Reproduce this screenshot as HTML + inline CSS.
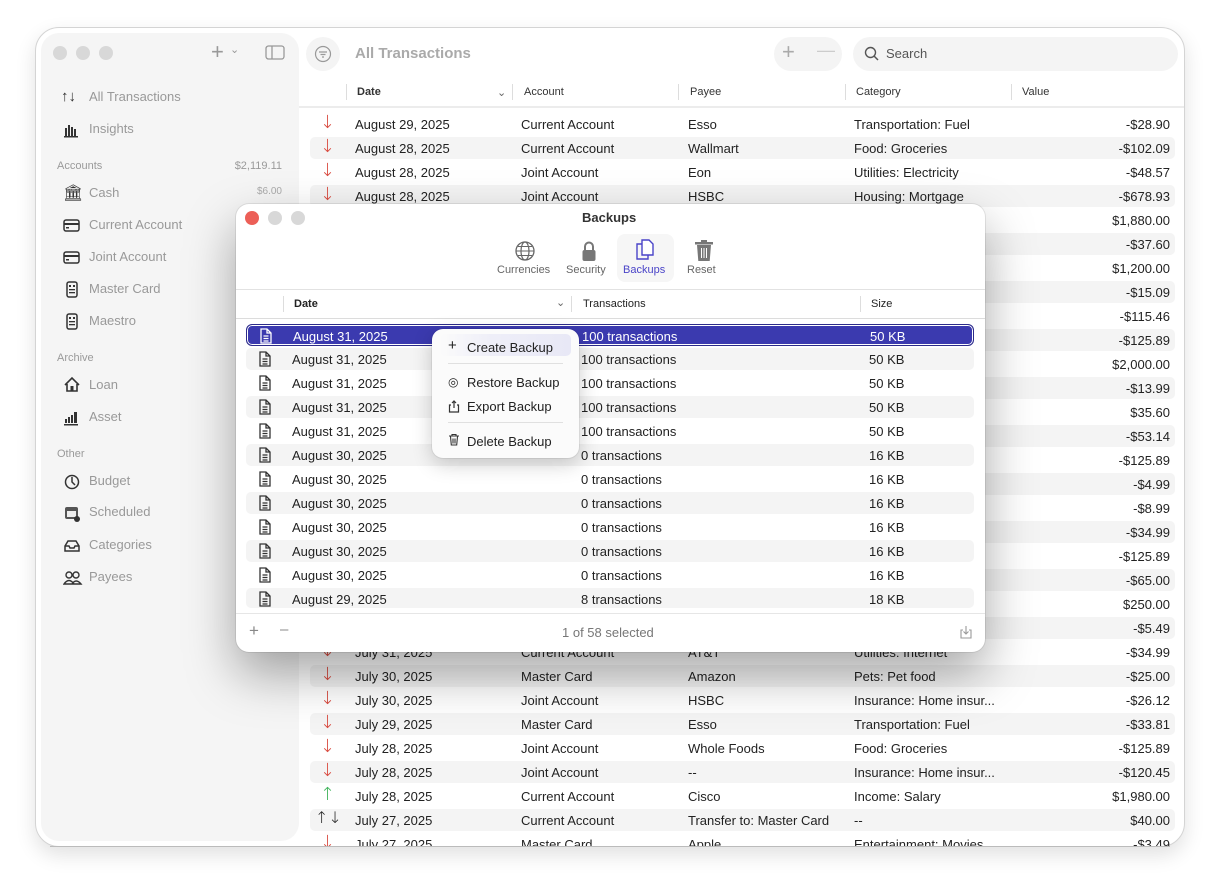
<!DOCTYPE html>
<html><head><meta charset="utf-8">
<style>
*{box-sizing:border-box;margin:0;padding:0}
body{width:1220px;height:890px;background:#fff;font-family:"Liberation Sans",sans-serif;font-size:13px;color:#222;position:relative;overflow:hidden}
.win{position:absolute;left:35px;top:27px;width:1150px;height:820px;border-radius:24px;background:#fff;border:1px solid #d4d4d4;box-shadow:0 8px 20px rgba(0,0,0,.12);overflow:hidden}
.side{position:absolute;left:5px;top:5px;width:258px;height:808px;background:#f5f5f5;border-radius:18px}
.a{position:absolute;white-space:nowrap}
.dot{position:absolute;width:14px;height:14px;border-radius:50%;background:#d8d8d8}
.sl{position:absolute;left:48px;color:#999;font-size:13px}
.sh{position:absolute;left:16px;color:#9a9a9a;font-size:11px}
.si{position:absolute;left:22px;width:18px;height:18px}
.r{position:absolute;left:275px;width:865px;height:22px}
.r.s{background:#f4f4f4;border-radius:5px}
.r span{position:absolute;top:4px;white-space:nowrap}
.ar{left:10px;color:#d94a3f;font-size:18px;top:-1px!important;font-family:"DejaVu Sans",sans-serif;font-weight:100}
.c1{left:45px}.c2{left:211px}.c3{left:378px}.c4{left:544px}.c5{right:5px}
.hd{position:absolute;top:86px;font-size:11px;color:#333}
.vs{position:absolute;width:1px;height:16px;background:#ddd}
.dlg{position:absolute;left:236px;top:204px;width:749px;height:448px;background:#fff;border-radius:13px;box-shadow:0 22px 50px rgba(0,0,0,.35),0 0 0 1px rgba(0,0,0,.08);overflow:hidden}
.br{position:absolute;left:10px;width:728px;height:22px}
.br.s{background:#f4f4f4;border-radius:5px}
.br span{position:absolute;top:4px;white-space:nowrap}
.br .d{left:46px}.br .t{left:335px}.br .z{left:623px}
.br svg{position:absolute;left:12px;top:3px}
.menu{position:absolute;left:432px;top:329px;width:147px;height:129px;background:#fbfbfb;border-radius:11px;box-shadow:0 6px 20px rgba(0,0,0,.2),0 0 0 1px rgba(0,0,0,.06)}
.menu span{position:absolute;left:35px;white-space:nowrap}
.menu i{position:absolute;left:16px;font-style:normal;font-size:12px}
</style></head><body>
<div class="win">
  <div class="side">
    <div class="dot" style="left:12px;top:13px"></div>
    <div class="dot" style="left:35px;top:13px"></div>
    <div class="dot" style="left:58px;top:13px"></div>
    <div class="a" style="left:170px;top:6px;font-size:22px;color:#999">+</div>
    <div class="a" style="left:189px;top:10px;font-size:11px;color:#999">&#8964;</div>
    <svg class="a" style="left:224px;top:12px" width="20" height="16"><rect x="1" y="1" width="18" height="13" rx="2.5" fill="none" stroke="#999" stroke-width="1.3"/><line x1="7" y1="1" x2="7" y2="14" stroke="#999" stroke-width="1.3"/></svg>
    <div class="a" style="left:20px;top:55px;font-size:15px;color:#333">&#8593;&#8595;</div><div class="sl" style="top:56px">All Transactions</div>
    <svg class="si" style="top:88px"><rect x="2" y="7" width="2" height="8" fill="#333"/><rect x="5" y="4" width="2" height="11" fill="#333"/><rect x="8" y="6" width="2" height="9" fill="#333"/><rect x="11" y="8" width="2" height="7" fill="#333"/><rect x="1" y="15" width="14" height="1.5" fill="#333"/></svg><div class="sl" style="top:88px">Insights</div>
    <div class="sh" style="top:127px">Accounts</div><div class="a" style="right:17px;top:127px;font-size:11px;color:#9a9a9a">$2,119.11</div>
    <div class="a" style="left:22px;top:150px;font-size:16px;color:#333">&#127963;</div><div class="sl" style="top:152px">Cash</div><div class="a" style="right:17px;top:153px;font-size:10px;color:#aaa">$6.00</div>
    <svg class="si" style="top:184px"><rect x="1" y="3" width="15" height="11" rx="2" fill="none" stroke="#333" stroke-width="1.5"/><rect x="1" y="6" width="15" height="2" fill="#333"/><rect x="3" y="10" width="3" height="1.5" fill="#333"/></svg><div class="sl" style="top:184px">Current Account</div>
    <svg class="si" style="top:216px"><rect x="1" y="3" width="15" height="11" rx="2" fill="none" stroke="#333" stroke-width="1.5"/><rect x="1" y="6" width="15" height="2" fill="#333"/><rect x="3" y="10" width="3" height="1.5" fill="#333"/></svg><div class="sl" style="top:216px">Joint Account</div>
    <svg class="si" style="top:248px"><rect x="4" y="1" width="10" height="15" rx="2" fill="none" stroke="#333" stroke-width="1.5"/><rect x="6" y="4" width="2" height="2" fill="#333"/><rect x="10" y="4" width="2" height="2" fill="#333"/><rect x="6" y="8" width="6" height="1.3" fill="#333"/><rect x="6" y="11" width="6" height="1.3" fill="#333"/></svg><div class="sl" style="top:248px">Master Card</div>
    <svg class="si" style="top:280px"><rect x="4" y="1" width="10" height="15" rx="2" fill="none" stroke="#333" stroke-width="1.5"/><rect x="6" y="4" width="2" height="2" fill="#333"/><rect x="10" y="4" width="2" height="2" fill="#333"/><rect x="6" y="8" width="6" height="1.3" fill="#333"/><rect x="6" y="11" width="6" height="1.3" fill="#333"/></svg><div class="sl" style="top:280px">Maestro</div>
    <div class="sh" style="top:319px">Archive</div>
    <svg class="si" style="top:343px"><path d="M2 9 L9 2 L16 9 M4 8 V15 H14 V8" fill="none" stroke="#333" stroke-width="1.6"/><rect x="7.5" y="10" width="3" height="5" fill="#333"/></svg><div class="sl" style="top:344px">Loan</div>
    <svg class="si" style="top:376px"><rect x="2" y="10" width="2" height="4" fill="#333"/><rect x="5" y="8" width="2" height="6" fill="#333"/><rect x="8" y="6" width="2" height="8" fill="#333"/><rect x="11" y="3" width="3" height="11" fill="#333"/><rect x="1" y="15" width="14" height="1.5" fill="#333"/></svg><div class="sl" style="top:376px">Asset</div>
    <div class="sh" style="top:415px">Other</div>
    <svg class="si" style="top:440px"><circle cx="9" cy="9" r="6.5" fill="none" stroke="#333" stroke-width="1.5"/><path d="M9 4 V9 L12 12" fill="none" stroke="#333" stroke-width="1.5"/></svg><div class="sl" style="top:440px">Budget</div>
    <svg class="si" style="top:472px"><rect x="2" y="2" width="13" height="12" rx="2" fill="#555"/><rect x="4" y="6" width="9" height="6" fill="#eee"/><circle cx="14" cy="14" r="3" fill="#333"/></svg><div class="sl" style="top:471px">Scheduled</div>
    <svg class="si" style="top:504px"><path d="M2 9 L5 4 H13 L16 9 V14 H2 Z" fill="none" stroke="#333" stroke-width="1.5"/><path d="M2 9 H6 L7 11 H11 L12 9 H16" fill="none" stroke="#333" stroke-width="1.5"/></svg><div class="sl" style="top:504px">Categories</div>
    <svg class="si" style="top:536px;width:20px"><circle cx="6" cy="6" r="3" fill="none" stroke="#333" stroke-width="1.4"/><circle cx="13" cy="6" r="3" fill="none" stroke="#333" stroke-width="1.4"/><path d="M1 15 Q6 8 11 15 Z M9 15 Q13 9 18 15 Z" fill="none" stroke="#333" stroke-width="1.4"/></svg><div class="sl" style="top:536px">Payees</div>
  </div>

  <div class="a" style="left:270px;top:9px;width:34px;height:34px;border-radius:50%;background:#f4f4f4"></div>
  <svg class="a" style="left:278px;top:17px" width="18" height="18"><circle cx="9" cy="9" r="7.5" fill="none" stroke="#999" stroke-width="1.2"/><path d="M5 7H13M6.5 9.5H11.5M8 12H10" stroke="#999" stroke-width="1.2"/></svg>
  <div class="a" style="left:319px;top:17px;font-size:15px;font-weight:bold;color:#aaa">All Transactions</div>
  <div class="a" style="left:738px;top:9px;width:68px;height:34px;border-radius:17px;background:#f4f4f4"></div>
  <div class="a" style="left:746px;top:11px;font-size:22px;color:#aaa">+</div>
  <div class="a" style="left:781px;top:12px;font-size:18px;color:#ccc">&#8212;</div>
  <div class="a" style="left:817px;top:9px;width:325px;height:34px;border-radius:17px;background:#f4f4f4"></div>
  <svg class="a" style="left:828px;top:18px" width="16" height="16"><circle cx="6.5" cy="6.5" r="5" fill="none" stroke="#555" stroke-width="1.4"/><line x1="10" y1="10" x2="14" y2="14" stroke="#555" stroke-width="1.5"/></svg>
  <div class="a" style="left:850px;top:18px;color:#555">Search</div>

  <div class="vs" style="left:310px;top:56px"></div><div class="vs" style="left:476px;top:56px"></div><div class="vs" style="left:642px;top:56px"></div><div class="vs" style="left:809px;top:56px"></div><div class="vs" style="left:975px;top:56px"></div>
  <div class="a" style="left:263px;top:78px;width:890px;height:2px;background:#ececec"></div>
</div>
<div class="hd" style="left:357px;font-weight:bold">Date</div><div class="hd" style="left:497px;color:#666">&#8964;</div>
<div class="hd" style="left:524px">Account</div><div class="hd" style="left:690px">Payee</div><div class="hd" style="left:856px">Category</div><div class="hd" style="left:1022px">Value</div>

<div class="r" style="top:113px;left:310px"><span class="ar">&#8595;</span><span class="c1">August 29, 2025</span><span class="c2">Current Account</span><span class="c3">Esso</span><span class="c4">Transportation: Fuel</span><span class="c5">-$28.90</span></div>
<div class="r s" style="top:137px;left:310px"><span class="ar">&#8595;</span><span class="c1">August 28, 2025</span><span class="c2">Current Account</span><span class="c3">Wallmart</span><span class="c4">Food: Groceries</span><span class="c5">-$102.09</span></div>
<div class="r" style="top:161px;left:310px"><span class="ar">&#8595;</span><span class="c1">August 28, 2025</span><span class="c2">Joint Account</span><span class="c3">Eon</span><span class="c4">Utilities: Electricity</span><span class="c5">-$48.57</span></div>
<div class="r s" style="top:185px;left:310px"><span class="ar">&#8595;</span><span class="c1">August 28, 2025</span><span class="c2">Joint Account</span><span class="c3">HSBC</span><span class="c4">Housing: Mortgage</span><span class="c5">-$678.93</span></div>
<div class="r" style="top:209px;left:310px"><span class="c5">$1,880.00</span></div>
<div class="r s" style="top:233px;left:310px"><span class="c5">-$37.60</span></div>
<div class="r" style="top:257px;left:310px"><span class="c5">$1,200.00</span></div>
<div class="r s" style="top:281px;left:310px"><span class="c5">-$15.09</span></div>
<div class="r" style="top:305px;left:310px"><span class="c5">-$115.46</span></div>
<div class="r s" style="top:329px;left:310px"><span class="c5">-$125.89</span></div>
<div class="r" style="top:353px;left:310px"><span class="c5">$2,000.00</span></div>
<div class="r s" style="top:377px;left:310px"><span class="c4">Subscriptions: Apps</span><span class="c5">-$13.99</span></div>
<div class="r" style="top:401px;left:310px"><span class="c5">$35.60</span></div>
<div class="r s" style="top:425px;left:310px"><span class="c4">Insurance: Vehicle</span><span class="c5">-$53.14</span></div>
<div class="r" style="top:449px;left:310px"><span class="c5">-$125.89</span></div>
<div class="r s" style="top:473px;left:310px"><span class="c5">-$4.99</span></div>
<div class="r" style="top:497px;left:310px"><span class="c4">Subscriptions: Apps</span><span class="c5">-$8.99</span></div>
<div class="r s" style="top:521px;left:310px"><span class="c5">-$34.99</span></div>
<div class="r" style="top:545px;left:310px"><span class="c5">-$125.89</span></div>
<div class="r s" style="top:569px;left:310px"><span class="c5">-$65.00</span></div>
<div class="r" style="top:593px;left:310px"><span class="c5">$250.00</span></div>
<div class="r s" style="top:617px;left:310px"><span class="c4">Subscriptions: Apps</span><span class="c5">-$5.49</span></div>
<div class="r" style="top:641px;left:310px"><span class="ar">&#8595;</span><span class="c1">July 31, 2025</span><span class="c2">Current Account</span><span class="c3">AT&amp;T</span><span class="c4">Utilities: Internet</span><span class="c5">-$34.99</span></div>
<div class="r s" style="top:665px;left:310px"><span class="ar">&#8595;</span><span class="c1">July 30, 2025</span><span class="c2">Master Card</span><span class="c3">Amazon</span><span class="c4">Pets: Pet food</span><span class="c5">-$25.00</span></div>
<div class="r" style="top:689px;left:310px"><span class="ar">&#8595;</span><span class="c1">July 30, 2025</span><span class="c2">Joint Account</span><span class="c3">HSBC</span><span class="c4">Insurance: Home insur...</span><span class="c5">-$26.12</span></div>
<div class="r s" style="top:713px;left:310px"><span class="ar">&#8595;</span><span class="c1">July 29, 2025</span><span class="c2">Master Card</span><span class="c3">Esso</span><span class="c4">Transportation: Fuel</span><span class="c5">-$33.81</span></div>
<div class="r" style="top:737px;left:310px"><span class="ar">&#8595;</span><span class="c1">July 28, 2025</span><span class="c2">Joint Account</span><span class="c3">Whole Foods</span><span class="c4">Food: Groceries</span><span class="c5">-$125.89</span></div>
<div class="r s" style="top:761px;left:310px"><span class="ar">&#8595;</span><span class="c1">July 28, 2025</span><span class="c2">Joint Account</span><span class="c3">--</span><span class="c4">Insurance: Home insur...</span><span class="c5">-$120.45</span></div>
<div class="r" style="top:785px;left:310px"><span class="ar" style="color:#3fb35a">&#8593;</span><span class="c1">July 28, 2025</span><span class="c2">Current Account</span><span class="c3">Cisco</span><span class="c4">Income: Salary</span><span class="c5">$1,980.00</span></div>
<div class="r s" style="top:809px;left:310px"><span class="ar" style="color:#222;left:5px;font-size:16px">&#8593;&#8595;</span><span class="c1">July 27, 2025</span><span class="c2">Current Account</span><span class="c3">Transfer to: Master Card</span><span class="c4">--</span><span class="c5">$40.00</span></div>
<div class="a" style="left:310px;top:833px;width:865px;height:13px;overflow:hidden"><div class="r" style="top:0;left:0"><span class="ar">&#8595;</span><span class="c1">July 27, 2025</span><span class="c2">Master Card</span><span class="c3">Apple</span><span class="c4">Entertainment: Movies</span><span class="c5">-$3.49</span></div></div>
<div class="a" style="left:50px;top:846px;width:1120px;height:1px;background:#bbb"></div>

<div class="dlg">
  <div class="dot" style="left:9px;top:7px;background:#ec5f57"></div>
  <div class="dot" style="left:32px;top:7px"></div>
  <div class="dot" style="left:55px;top:7px"></div>
  <div class="a" style="left:346px;top:6px;font-weight:bold;color:#333">Backups</div>
  <div class="a" style="left:381px;top:30px;width:57px;height:48px;border-radius:8px;background:#f6f6f6"></div>
  <svg class="a" style="left:278px;top:36px" width="22" height="22"><circle cx="11" cy="11" r="9" fill="none" stroke="#666" stroke-width="1.3"/><ellipse cx="11" cy="11" rx="4" ry="9" fill="none" stroke="#666" stroke-width="1.2"/><path d="M2 11H20M4 6.5H18M4 15.5H18" stroke="#666" stroke-width="1.1"/></svg>
  <svg class="a" style="left:345px;top:36px" width="16" height="22"><path d="M4 10V6.5a4 4 0 0 1 8 0V10" fill="none" stroke="#777" stroke-width="2"/><rect x="1.5" y="10" width="13" height="11" rx="2" fill="#777"/></svg>
  <svg class="a" style="left:399px;top:34px" width="22" height="26"><path d="M2 6h7l4 4v11H2Z" fill="none" stroke="#4a44c8" stroke-width="1.4"/><path d="M7 2h7l4 4v11H7Z" fill="#fff" stroke="#4a44c8" stroke-width="1.4"/></svg>
  <svg class="a" style="left:458px;top:35px" width="20" height="24"><rect x="1" y="3" width="18" height="2.5" fill="#777"/><rect x="7" y="1" width="6" height="2" fill="#777"/><path d="M3 6h14l-1.3 16H4.3Z" fill="#777"/><path d="M7.5 9v10M10 9v10M12.5 9v10" stroke="#fff" stroke-width="1"/></svg>
  <div class="a" style="left:261px;top:60px;font-size:11px;color:#666">Currencies</div>
  <div class="a" style="left:330px;top:60px;font-size:11px;color:#666">Security</div>
  <div class="a" style="left:387px;top:60px;font-size:11px;color:#4a44c8">Backups</div>
  <div class="a" style="left:451px;top:60px;font-size:11px;color:#666">Reset</div>
  <div class="a" style="left:0;top:85px;width:749px;height:1px;background:#e2e2e2"></div>
  <div class="vs" style="left:47px;top:92px"></div><div class="vs" style="left:335px;top:92px"></div><div class="vs" style="left:624px;top:92px"></div>
  <div class="a" style="left:58px;top:94px;font-size:11px;font-weight:bold">Date</div>
  <div class="a" style="left:320px;top:92px;font-size:11px;color:#666">&#8964;</div>
  <div class="a" style="left:347px;top:94px;font-size:11px">Transactions</div>
  <div class="a" style="left:635px;top:94px;font-size:11px">Size</div>
  <div class="a" style="left:0;top:114px;width:749px;height:1px;background:#dcdcdc"></div>

  <div class="br" style="top:120px;background:#3b3aaf;border:1.5px solid #2c2b8a;border-radius:6px;box-shadow:0 0 0 1px #fff inset;color:#fff"><svg width="14" height="16"><path d="M2 1h6l4 4v10H2Z M8 1v4h4 M4.5 8h5M4.5 10.5h5M4.5 13h5" fill="none" stroke="#fff" stroke-width="1.3"/></svg><span class="d">August 31, 2025</span><span class="t">100 transactions</span><span class="z">50 KB</span></div>
  <div class="br s" style="top:144px"><svg width="14" height="16"><path d="M2 1h6l4 4v10H2Z M8 1v4h4 M4.5 8h5M4.5 10.5h5M4.5 13h5" fill="none" stroke="#333" stroke-width="1.3"/></svg><span class="d">August 31, 2025</span><span class="t">100 transactions</span><span class="z">50 KB</span></div>
  <div class="br" style="top:168px"><svg width="14" height="16"><path d="M2 1h6l4 4v10H2Z M8 1v4h4 M4.5 8h5M4.5 10.5h5M4.5 13h5" fill="none" stroke="#333" stroke-width="1.3"/></svg><span class="d">August 31, 2025</span><span class="t">100 transactions</span><span class="z">50 KB</span></div>
  <div class="br s" style="top:192px"><svg width="14" height="16"><path d="M2 1h6l4 4v10H2Z M8 1v4h4 M4.5 8h5M4.5 10.5h5M4.5 13h5" fill="none" stroke="#333" stroke-width="1.3"/></svg><span class="d">August 31, 2025</span><span class="t">100 transactions</span><span class="z">50 KB</span></div>
  <div class="br" style="top:216px"><svg width="14" height="16"><path d="M2 1h6l4 4v10H2Z M8 1v4h4 M4.5 8h5M4.5 10.5h5M4.5 13h5" fill="none" stroke="#333" stroke-width="1.3"/></svg><span class="d">August 31, 2025</span><span class="t">100 transactions</span><span class="z">50 KB</span></div>
  <div class="br s" style="top:240px"><svg width="14" height="16"><path d="M2 1h6l4 4v10H2Z M8 1v4h4 M4.5 8h5M4.5 10.5h5M4.5 13h5" fill="none" stroke="#333" stroke-width="1.3"/></svg><span class="d">August 30, 2025</span><span class="t">0 transactions</span><span class="z">16 KB</span></div>
  <div class="br" style="top:264px"><svg width="14" height="16"><path d="M2 1h6l4 4v10H2Z M8 1v4h4 M4.5 8h5M4.5 10.5h5M4.5 13h5" fill="none" stroke="#333" stroke-width="1.3"/></svg><span class="d">August 30, 2025</span><span class="t">0 transactions</span><span class="z">16 KB</span></div>
  <div class="br s" style="top:288px"><svg width="14" height="16"><path d="M2 1h6l4 4v10H2Z M8 1v4h4 M4.5 8h5M4.5 10.5h5M4.5 13h5" fill="none" stroke="#333" stroke-width="1.3"/></svg><span class="d">August 30, 2025</span><span class="t">0 transactions</span><span class="z">16 KB</span></div>
  <div class="br" style="top:312px"><svg width="14" height="16"><path d="M2 1h6l4 4v10H2Z M8 1v4h4 M4.5 8h5M4.5 10.5h5M4.5 13h5" fill="none" stroke="#333" stroke-width="1.3"/></svg><span class="d">August 30, 2025</span><span class="t">0 transactions</span><span class="z">16 KB</span></div>
  <div class="br s" style="top:336px"><svg width="14" height="16"><path d="M2 1h6l4 4v10H2Z M8 1v4h4 M4.5 8h5M4.5 10.5h5M4.5 13h5" fill="none" stroke="#333" stroke-width="1.3"/></svg><span class="d">August 30, 2025</span><span class="t">0 transactions</span><span class="z">16 KB</span></div>
  <div class="br" style="top:360px"><svg width="14" height="16"><path d="M2 1h6l4 4v10H2Z M8 1v4h4 M4.5 8h5M4.5 10.5h5M4.5 13h5" fill="none" stroke="#333" stroke-width="1.3"/></svg><span class="d">August 30, 2025</span><span class="t">0 transactions</span><span class="z">16 KB</span></div>
  <div class="br s" style="top:384px;height:20px;overflow:hidden"><svg width="14" height="16"><path d="M2 1h6l4 4v10H2Z M8 1v4h4 M4.5 8h5M4.5 10.5h5M4.5 13h5" fill="none" stroke="#333" stroke-width="1.3"/></svg><span class="d">August 29, 2025</span><span class="t">8 transactions</span><span class="z">18 KB</span></div>
  <div class="a" style="left:0;top:409px;width:749px;height:1px;background:#e6e6e6"></div>
  <div class="a" style="left:13px;top:417px;font-size:17px;color:#888">+</div>
  <div class="a" style="left:44px;top:417px;font-size:15px;color:#888">&#8211;</div>
  <div class="a" style="left:326px;top:421px;color:#777">1 of 58 selected</div>
  <svg class="a" style="left:723px;top:421px" width="14" height="14"><path d="M4 5H2v8h10V5h-2M7 1v8M4.5 6.5 7 9l2.5-2.5" fill="none" stroke="#999" stroke-width="1.1"/></svg>
</div>

<div class="menu">
  <div class="a" style="left:8px;top:5px;width:131px;height:22px;border-radius:5px;background:linear-gradient(90deg,#fbfbfb,#eeeef8 40%,#e8e8f6)"></div>
  <i style="top:8px;font-size:15px">+</i><span style="top:11px">Create Backup</span>
  <div class="a" style="left:16px;top:34px;width:115px;height:1px;background:#e0e0e0"></div>
  <i style="top:46px">&#9678;</i><span style="top:46px">Restore Backup</span>
  <svg class="a" style="left:16px;top:71px" width="12" height="13"><path d="M3 5H1.5v7h9V5H9M6 1v7M4 3l2-2 2 2" fill="none" stroke="#333" stroke-width="1.2"/></svg><span style="top:70px">Export Backup</span>
  <div class="a" style="left:16px;top:93px;width:115px;height:1px;background:#e0e0e0"></div>
  <svg class="a" style="left:16px;top:104px" width="12" height="13"><path d="M1 3h10M4 3V1.5h4V3M2.5 3.5l.8 8.5h5.4l.8-8.5M5 5.5v5M7 5.5v5" fill="none" stroke="#333" stroke-width="1.1"/></svg><span style="top:105px">Delete Backup</span>
</div>
</body></html>
